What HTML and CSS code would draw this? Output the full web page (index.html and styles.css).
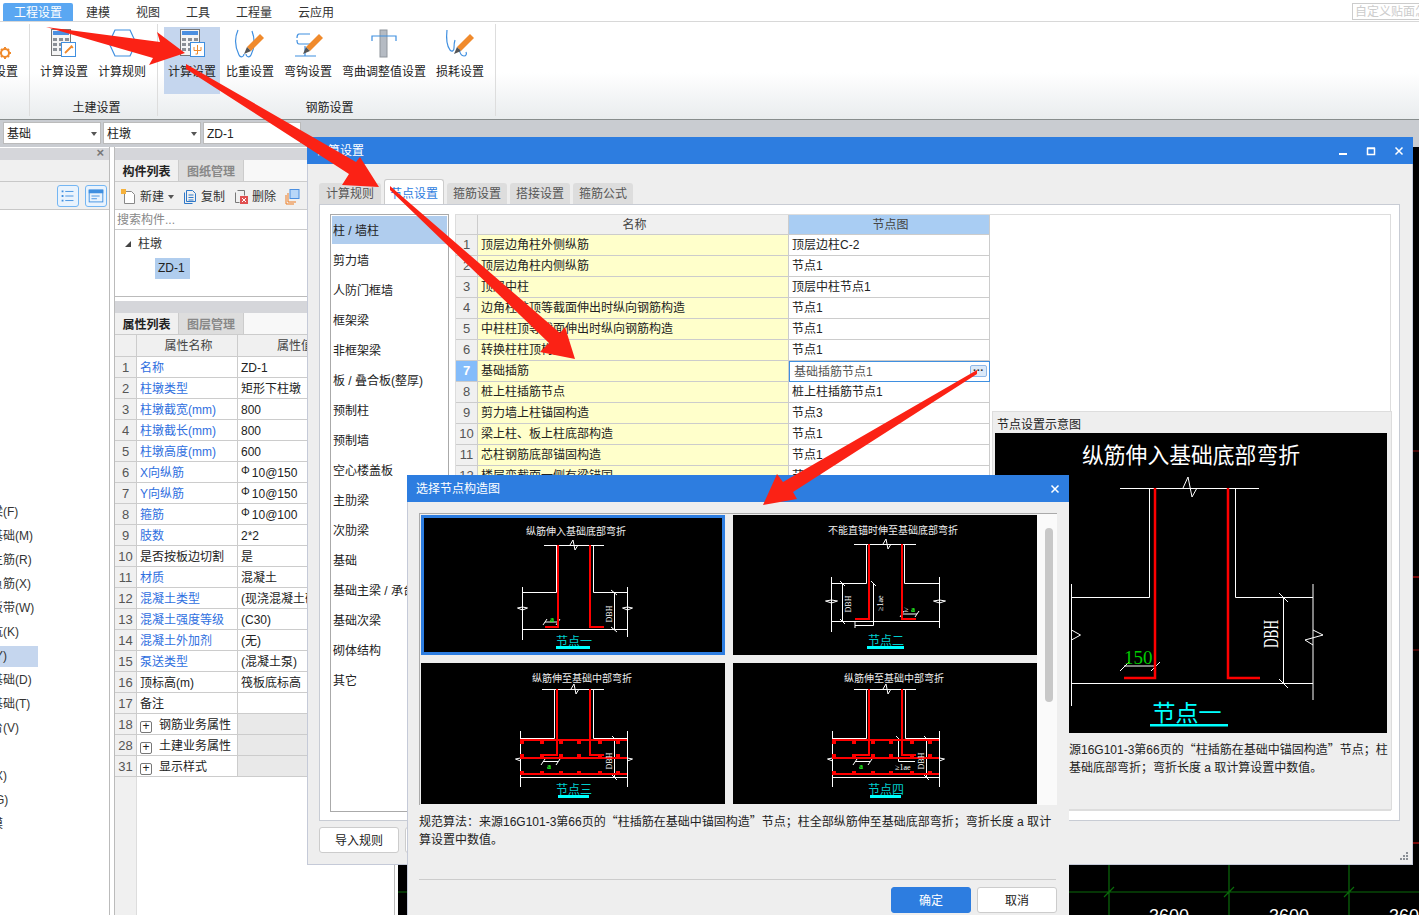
FILE: index.html
```html
<!DOCTYPE html>
<html lang="zh-CN">
<head>
<meta charset="utf-8">
<title>计算设置</title>
<link rel="stylesheet" href="styles.css">
</head>
<body>
<div class="app">
  <nav class="menu">
    <span class="menu-tab active">工程设置</span>
    <span class="menu-tab">建模</span>
    <span class="menu-tab">视图</span>
    <span class="menu-tab">工具</span>
    <span class="menu-tab">工程量</span>
    <span class="menu-tab">云应用</span>
    <span class="menu-search">自定义贴面怎么做</span>
  </nav>

  <section class="ribbon">
    <div class="group group-clip">
      <div class="group-items">
        <div class="rb-item">
          <svg class="rb-icon" viewBox="0 0 34 36"><circle cx="28" cy="26" r="4" class="gear"/><path class="gear-teeth" d="M28 20v2M28 30v2M22 26h2M32 26h2M24 22l1.500 1.500M30.500 28.500L32 30M24 30l1.500-1.500M30.500 23.500L32 22"/></svg>
          <span>楼层设置</span>
        </div>
      </div>
    </div>
    <div class="group group-civil">
      <div class="group-items">
        <div class="rb-item">
          <svg class="rb-icon" viewBox="0 0 34 36">
            <rect x="4.500" y="2.500" width="19" height="26" class="calc"/><rect x="6" y="4" width="16" height="4" class="calc-top"/>
            <path class="calc-keys" d="M6 11h4v3H6zM12 11h4v3h-4zM18 11h4v3h-4zM6 16h4v3H6zM12 16h4v3h-4zM6 21h4v3H6zM12 21h4v3h-4z"/>
            <rect x="14.500" y="15.500" width="14" height="14" class="doc"/>
            <path class="wrench" d="M18 26l6-6M24 18.500l1.800 2.500"/>
          </svg>
          <span>计算设置</span>
        </div>
        <div class="rb-item">
          <svg class="rb-icon" viewBox="0 0 34 36"><path class="hook" d="M10 3h15l6 13-6 13H10L4 16z"/></svg>
          <span>计算规则</span>
        </div>
      </div>
      <div class="group-name">土建设置</div>
    </div>
    <div class="group group-rebar">
      <div class="group-items">
        <div class="rb-item selected">
          <svg class="rb-icon" viewBox="0 0 34 36">
            <rect x="5.500" y="2.500" width="19" height="26" class="calc"/><rect x="7" y="4" width="16" height="4" class="calc-top"/>
            <path class="calc-keys" d="M7 11h4v3H7zM13 11h4v3h-4zM19 11h4v3h-4zM7 16h4v3H7zM13 16h4v3h-4zM7 21h4v3H7zM13 21h4v3h-4z"/>
            <rect x="15.500" y="15.500" width="14" height="14" class="doc"/>
            <path class="wrench-thin" d="M22.500 18v9M19 20v3.500h7V20M22.500 27h-2"/>
          </svg>
          <span>计算设置</span>
        </div>
        <div class="rb-item">
          <svg class="rb-icon" viewBox="0 0 34 36">
            <path class="hook" d="M5 3C1 12 2 20 6 28c1.500 3 5 2 5-1M19 4c3 8 3 16-1 24-1.500 3-5 2-5-1"/>
            <path class="pencil" d="M14 20L27 7l4 4-13 13z"/><path class="pencil-tip" d="M14 20l-3 7 7-3z"/>
          </svg>
          <span>比重设置</span>
        </div>
        <div class="rb-item">
          <svg class="rb-icon" viewBox="0 0 34 36">
            <path class="hook" d="M8 7h11M6 11c0-4 2-4 2-4M8 17h14M6 13c0 4 2 4 2 4M4 29h21M14 19v10"/>
            <path class="pencil" d="M15 20L28 7l4 4-13 13z"/><path class="pencil-tip" d="M15 20l-3 7 7-3z"/>
          </svg>
          <span>弯钩设置</span>
        </div>
        <div class="rb-item">
          <svg class="rb-icon" viewBox="0 0 34 36">
            <rect x="13" y="3" width="7" height="27" class="column"/>
            <path class="hook" d="M5 14V9h24v5"/>
          </svg>
          <span>弯曲调整值设置</span>
        </div>
        <div class="rb-item">
          <svg class="rb-icon" viewBox="0 0 34 36">
            <path class="hook" d="M4 3c-1 9 0 16 3 20 2 2 4 1 4-2 0-3 0-5 1-8M16 22c1 5 3 7 5 7s3-2 2-4"/>
            <path class="pencil" d="M14 20L27 7l4 4-13 13z"/><path class="pencil-tip" d="M14 20l-3 7 7-3z"/>
          </svg>
          <span>损耗设置</span>
        </div>
      </div>
      <div class="group-name">钢筋设置</div>
    </div>
  </section>

  <div class="selectors">
    <div class="selector">基础<i class="caret"></i></div>
    <div class="selector">柱墩<i class="caret"></i></div>
    <div class="selector">ZD-1</div>
  </div>

  <div class="workspace">
    <aside class="nav-panel">
      <div class="panel-head"><span class="panel-close">×</span></div>
      <div class="nav-bar"></div>
      <div class="nav-tools">
        <span class="view-btn"><svg viewBox="0 0 22 22"><path class="view-ln" d="M8 6h9M8 11h9M8 16h9"/><path class="view-dot" d="M4 5h2v2H4zM4 10h2v2H4zM4 15h2v2H4z"/></svg></span>
        <span class="view-btn"><svg viewBox="0 0 22 22"><rect x="3.500" y="4.500" width="15" height="13" class="view-ln"/><path class="view-dot" d="M3 4h16v4H3z"/><path class="view-ln" d="M6 11h9M6 14h6"/></svg></span>
      </div>
      <ul class="nav-list">
        <li class="nav-item">基础梁(F)</li>
        <li class="nav-item">筏板基础(M)</li>
        <li class="nav-item">筏板主筋(R)</li>
        <li class="nav-item">筏板负筋(X)</li>
        <li class="nav-item">基础板带(W)</li>
        <li class="nav-item">集水坑(K)</li>
        <li class="nav-item sel">柱墩(Y)</li>
        <li class="nav-item">独立基础(D)</li>
        <li class="nav-item">条形基础(T)</li>
        <li class="nav-item">桩承台(V)</li>
        <li class="nav-item"></li>
        <li class="nav-item">垫层(X)</li>
        <li class="nav-item">地沟(G)</li>
        <li class="nav-item">砖胎膜</li>
      </ul>
    </aside>

    <section class="mid-panel">
      <div class="panel-head"></div>
      <div class="panel-tabs"><span class="panel-tab on">构件列表</span><span class="panel-tab">图纸管理</span></div>
      <div class="tools">
        <span class="tool">
          <svg class="tool-icon wide" viewBox="0 0 15 16"><path class="t-doc" d="M3.500 2.500h7l3 3v9h-10z"/><path class="t-star" d="M0 0h5v5H0z"/></svg>新建<i class="caret"></i>
        </span>
        <span class="tool">
          <svg class="tool-icon" viewBox="0 0 14 16"><path class="t-blue" d="M1.500 3.500v11h8M3.500 1.500h6l3 3v8h-9zM5.500 6h5M5.500 8.500h5M5.500 11h5"/></svg>复制
        </span>
        <span class="tool">
          <svg class="tool-icon" viewBox="0 0 14 16"><path class="t-gray" d="M1.500 3.500v10h4M3.500 1.500h7v5"/><path class="t-red" d="M6 7h8v8H6z"/><path class="t-x" d="M8 9l4 4M12 9l-4 4"/></svg>删除
        </span>
        <span class="tool">
          <svg class="tool-icon wide" viewBox="0 0 15 16"><path class="t-orange" d="M1 6v9h8M3 4v9h8"/><rect x="5" y="0.500" width="9" height="9" class="t-fill"/></svg>
        </span>
      </div>
      <div class="search">搜索构件...</div>
      <div class="tree">
        <div class="tree-root"><i class="tree-arrow"></i>柱墩</div>
        <div class="tree-leaf">ZD-1</div>
      </div>
      <div class="panel-gap"></div>
      <div class="panel-head"></div>
      <div class="panel-tabs"><span class="panel-tab on">属性列表</span><span class="panel-tab">图层管理</span></div>
      <table class="props">
        <colgroup><col class="c-no"><col class="c-name"><col class="c-val"></colgroup>
        <thead><tr><th></th><th>属性名称</th><th class="val-head">属性值</th></tr></thead>
        <tbody>
          <tr><td class="no">1</td><td class="link">名称</td><td>ZD-1</td></tr>
          <tr><td class="no">2</td><td class="link">柱墩类型</td><td>矩形下柱墩</td></tr>
          <tr><td class="no">3</td><td class="link">柱墩截宽(mm)</td><td>800</td></tr>
          <tr><td class="no">4</td><td class="link">柱墩截长(mm)</td><td>800</td></tr>
          <tr><td class="no">5</td><td class="link">柱墩高度(mm)</td><td>600</td></tr>
          <tr><td class="no">6</td><td class="link">X向纵筋</td><td><sup class="rebar">Φ</sup>10@150</td></tr>
          <tr><td class="no">7</td><td class="link">Y向纵筋</td><td><sup class="rebar">Φ</sup>10@150</td></tr>
          <tr><td class="no">8</td><td class="link">箍筋</td><td><sup class="rebar">Φ</sup>10@100</td></tr>
          <tr><td class="no">9</td><td class="link">肢数</td><td>2*2</td></tr>
          <tr><td class="no">10</td><td>是否按板边切割</td><td>是</td></tr>
          <tr><td class="no">11</td><td class="link">材质</td><td>混凝土</td></tr>
          <tr><td class="no">12</td><td class="link">混凝土类型</td><td>(现浇混凝土碎石)</td></tr>
          <tr><td class="no">13</td><td class="link">混凝土强度等级</td><td>(C30)</td></tr>
          <tr><td class="no">14</td><td class="link">混凝土外加剂</td><td>(无)</td></tr>
          <tr><td class="no">15</td><td class="link">泵送类型</td><td>(混凝土泵)</td></tr>
          <tr><td class="no">16</td><td>顶标高(m)</td><td>筏板底标高</td></tr>
          <tr><td class="no">17</td><td>备注</td><td></td></tr>
          <tr><td class="no">18</td><td><span class="plus">+</span>钢筋业务属性</td><td class="gray"></td></tr>
          <tr><td class="no">28</td><td><span class="plus">+</span>土建业务属性</td><td class="gray"></td></tr>
          <tr><td class="no">31</td><td><span class="plus">+</span>显示样式</td><td class="gray"></td></tr>
        </tbody>
      </table>
      <div class="props-gutter"></div>
    </section>

    <div class="canvas">
      <svg class="canvas-svg" viewBox="398 146 1021 769">
        <path class="grid-ln" d="M398 891H1419M1109 860V915M1229 860V915M1349 860V915M1104 896l10-10M1224 896l10-10M1344 896l10-10"/>
        <path class="tick-dark" d="M1413 450h6M1413 649h6"/>
        <path class="tick-red" d="M1413 576h6M1413 842h6"/>
        <text class="dim-text" x="1169" y="921">3600</text>
        <text class="dim-text" x="1289" y="921">3600</text>
        <text class="dim-text" x="1409" y="921">3600</text>
      </svg>
    </div>
  </div>
</div>

<div class="dialog dlg-calc">
  <header class="dlg-title">
    <span>计算设置</span>
    <span class="win-btns">
      <svg viewBox="0 0 10 10"><path class="win-fill" d="M1 7h8v2H1z"/></svg>
      <svg viewBox="0 0 10 10"><path class="win-ln" d="M1.500 2.500h7v6h-7zM1 2h8"/></svg>
      <svg viewBox="0 0 10 10"><path class="win-ln" d="M1.500 1.500l7 7M8.500 1.500l-7 7"/></svg>
    </span>
  </header>
  <div class="tabs">
    <span class="tab first">计算规则</span>
    <span class="tab on">节点设置</span>
    <span class="tab">箍筋设置</span>
    <span class="tab">搭接设置</span>
    <span class="tab">箍筋公式</span>
  </div>
  <div class="tab-panel">
    <ul class="cat-list">
      <li class="cat on">柱 / 墙柱</li>
      <li class="cat">剪力墙</li>
      <li class="cat">人防门框墙</li>
      <li class="cat">框架梁</li>
      <li class="cat">非框架梁</li>
      <li class="cat">板 / 叠合板(整厚)</li>
      <li class="cat">预制柱</li>
      <li class="cat">预制墙</li>
      <li class="cat">空心楼盖板</li>
      <li class="cat">主肋梁</li>
      <li class="cat">次肋梁</li>
      <li class="cat">基础</li>
      <li class="cat">基础主梁 / 承台梁</li>
      <li class="cat">基础次梁</li>
      <li class="cat">砌体结构</li>
      <li class="cat">其它</li>
    </ul>
    <div class="node-area">
      <table class="nodes">
        <colgroup><col class="n-no"><col class="n-name"><col class="n-img"></colgroup>
        <thead><tr><th></th><th>名称</th><th class="hl">节点图</th></tr></thead>
        <tbody>
          <tr><td class="no">1</td><td class="yl">顶层边角柱外侧纵筋</td><td>顶层边柱C-2</td></tr>
          <tr><td class="no">2</td><td class="yl">顶层边角柱内侧纵筋</td><td>节点1</td></tr>
          <tr><td class="no">3</td><td class="yl">顶层中柱</td><td>顶层中柱节点1</td></tr>
          <tr><td class="no">4</td><td class="yl">边角柱柱顶等截面伸出时纵向钢筋构造</td><td>节点1</td></tr>
          <tr><td class="no">5</td><td class="yl">中柱柱顶等截面伸出时纵向钢筋构造</td><td>节点1</td></tr>
          <tr><td class="no">6</td><td class="yl">转换柱柱顶构造</td><td>节点1</td></tr>
          <tr><td class="no cur">7</td><td class="yl">基础插筋</td><td class="editing"><span class="edit-val">基础插筋节点1</span><span class="more">···</span></td></tr>
          <tr><td class="no">8</td><td class="yl">桩上柱插筋节点</td><td>桩上柱插筋节点1</td></tr>
          <tr><td class="no">9</td><td class="yl">剪力墙上柱锚固构造</td><td>节点3</td></tr>
          <tr><td class="no">10</td><td class="yl">梁上柱、板上柱底部构造</td><td>节点1</td></tr>
          <tr><td class="no">11</td><td class="yl">芯柱钢筋底部锚固构造</td><td>节点1</td></tr>
          <tr><td class="no">12</td><td class="yl">楼层变截面一侧有梁锚固</td><td>节点1</td></tr>
        </tbody>
      </table>
      <div class="side">
        <div class="preview">
          <div class="preview-title">节点设置示意图</div>
          <svg class="preview-img" viewBox="995 433 392 300">
            <text class="pv-title" x="1191" y="463">纵筋伸入基础底部弯折</text>
            <path class="ln" d="M1120 488.500H1259M1149.500 488.500V597.500H1071.500M1071.500 584V706M1235.500 488.500V597.500H1313M1313 584V700M1071.500 683.500H1313M1283.500 597.500V683.500M1279 593l9 9M1279 679l9 9M1124 666H1155M1120 671l9-9M1151 671l9-9"/>
            <path class="ln" d="M1183 488l5-11 4 20 5-9M1313 630l10 5-18 5 8 5M1071.500 630l9 5-9 5"/>
            <path class="rb-thick" d="M1155 488V678H1124M1228 488V678H1260"/>
            <text class="pv-dbh" transform="translate(1278 634) rotate(-90)" textLength="28" lengthAdjust="spacingAndGlyphs">DBH</text>
            <text class="pv-num" x="1124" y="664">150</text>
            <text class="pv-name" x="1187" y="721">节点一</text>
            <rect class="cy" x="1150" y="724" width="78" height="2.500"/>
          </svg>
          <p class="preview-text">规范算法：来源16G101-3第66页的<span class="quote">“</span>柱插筋在基础中锚固构造<span class="quote">”</span>节点；柱全部纵筋伸至基础底部弯折；弯折长度 a 取计算设置中数值。</p>
        </div>
      </div>
    </div>
  </div>
  <div class="dlg-foot">
    <button class="btn">导入规则</button>
    <button class="btn"></button>
  </div>
  <svg class="grip" viewBox="0 0 9 9"><path d="M6 0h2v2H6zM3 3h2v2H3zM6 3h2v2H6zM0 6h2v2H0zM3 6h2v2H3zM6 6h2v2H6z"/></svg>
</div>

<div class="dialog dlg-node">
  <header class="dlg-title">
    <span>选择节点构造图</span>
    <span class="win-btns"><svg viewBox="0 0 10 10"><path class="win-ln" d="M1.500 1.500l7 7M8.500 1.500l-7 7"/></svg></span>
  </header>
  <div class="chooser">
    <div class="thumbs">
      <div class="thumb selected">
        <svg viewBox="424 518 298 134">
          <text class="th-title" x="576" y="535">纵筋伸入基础底部弯折</text>
          <path class="ln" d="M544 545.500H604M556.500 545.500V592.500H522.500M522.500 587V640M593.500 545.500V592.500H627.500M627.500 587V637M522.500 629.500H627.500M614.500 592.500V630M611 590l6 5M611 627l6 5M545 622H558M543 625l4-6M556 625l4-6"/>
          <path class="ln" d="M570 545l3-5 2 10 3-5M522.500 607l-5 1 5 2 5-2zM627.500 607l-5 1 5 2 5-2z"/>
          <path class="rb" d="M558 545V627H545M590 545V627H604"/>
          <text class="th-dbh" transform="translate(612 614) rotate(-90)">DBH</text>
          <text class="th-a" x="552" y="622">a</text>
          <text class="th-name" x="574" y="646">节点一</text>
          <rect class="cy" x="556" y="646" width="34" height="3"/>
        </svg>
      </div>
      <div class="thumb">
        <svg viewBox="733 515 304 140">
          <text class="th-title" x="893" y="534">不能直锚时伸至基础底部弯折</text>
          <path class="ln" d="M854 544.500H916M866.500 544.500V583.500H831.500M831.500 577V632M904.500 544.500V583.500H939.500M939.500 577V628M831.500 621.500H939.500M842.500 583.500V621.500M840 581l5 5M840 619l5 5M873.500 583.500V625.500H855M871 581l5 5M855 622v6M902 614H917M900 617l4-6M915 617l4-6"/>
          <path class="ln" d="M883 544l3-5 2 10 3-5M831.500 600l-6 1 6 2 6-2zM939.500 600l-6 1 6 2 6-2z"/>
          <path class="rb" d="M869 544V619H855M902 544V619H916"/>
          <text class="th-dbh" transform="translate(851 604) rotate(-90)">DBH</text>
          <text class="th-lae" transform="translate(883 611) rotate(-90)">≥1ae</text>
          <text class="th-small" x="904" y="612">≥</text>
          <text class="th-a" x="913" y="612">a</text>
          <text class="th-name" x="886" y="645">节点二</text>
          <rect class="cy" x="867" y="646" width="37" height="3"/>
        </svg>
      </div>
      <div class="thumb">
        <svg viewBox="421 663 304 141">
          <text class="th-title" x="582" y="682">纵筋伸至基础中部弯折</text>
          <path class="ln" d="M542 689.500H604M554.500 689.500V738.500H520.500M520.500 731V787M593.500 689.500V738.500H627.500M627.500 731V787M520.500 777.500H627.500M614.500 738.500V777.500M612 736l5 5M612 775l5 5M543 761.500H558M541 765l4-6M556 765l4-6"/>
          <path class="ln" d="M571 689l3-5 2 10 3-5M520.500 758l-5 1 5 2M627.500 758l5 1-5 2"/>
          <path class="rb" d="M520 740H627M520 758H627M520 774H627M557 689V755H540M590 689V755H604"/>
          <path class="bar-dots" d="M520 741h4v3h-4zM540 741h4v3h-4zM559 741h4v3h-4zM577 741h4v3h-4zM598 741h4v3h-4zM616 741h4v3h-4zM520 754h4v3h-4zM540 754h4v3h-4zM559 754h4v3h-4zM577 754h4v3h-4zM598 754h4v3h-4zM616 754h4v3h-4zM520 771h4v3h-4zM540 771h4v3h-4zM559 771h4v3h-4zM577 771h4v3h-4zM598 771h4v3h-4zM616 771h4v3h-4z"/>
          <text class="th-dbh" transform="translate(612 761) rotate(-90)">DBH</text>
          <text class="th-a" x="549" y="769">a</text>
          <text class="th-name" x="574" y="794">节点三</text>
          <rect class="cy" x="558" y="795" width="31" height="3"/>
        </svg>
      </div>
      <div class="thumb">
        <svg viewBox="733 663 304 141">
          <text class="th-title" x="894" y="682">纵筋伸至基础中部弯折</text>
          <path class="ln" d="M854 689.500H916M866.500 689.500V738.500H832.500M832.500 731V787M905.500 689.500V738.500H939.500M939.500 731V787M832.500 777.500H939.500M926.500 738.500V777.500M924 736l5 5M924 775l5 5M855 761.500H870M853 765l4-6M868 765l4-6M898.500 738.500V761.500H915M896 736l5 5"/>
          <path class="ln" d="M883 689l3-5 2 10 3-5M832.500 758l-5 1 5 2M939.500 758l5 1-5 2"/>
          <path class="rb" d="M832 740H939M832 758H939M832 774H939M869 689V755H852M902 689V755H916"/>
          <path class="bar-dots" d="M832 741h4v3h-4zM852 741h4v3h-4zM871 741h4v3h-4zM889 741h4v3h-4zM910 741h4v3h-4zM928 741h4v3h-4zM832 754h4v3h-4zM852 754h4v3h-4zM871 754h4v3h-4zM889 754h4v3h-4zM910 754h4v3h-4zM928 754h4v3h-4zM832 771h4v3h-4zM852 771h4v3h-4zM871 771h4v3h-4zM889 771h4v3h-4zM910 771h4v3h-4zM928 771h4v3h-4z"/>
          <text class="th-dbh" transform="translate(924 761) rotate(-90)">DBH</text>
          <text class="th-lae" x="895" y="770">≥1ae</text>
          <text class="th-a" x="861" y="769">a</text>
          <text class="th-name" x="886" y="794">节点四</text>
          <rect class="cy" x="870" y="795" width="31" height="3"/>
        </svg>
      </div>
    </div>
    <div class="scroll"><i class="scroll-thumb"></i></div>
  </div>
  <p class="node-text">规范算法：来源16G101-3第66页的<span class="quote">“</span>柱插筋在基础中锚固构造<span class="quote">”</span>节点；柱全部纵筋伸至基础底部弯折；弯折长度 a 取计算设置中数值。</p>
  <div class="node-rule"></div>
  <div class="node-foot">
    <button class="btn primary">确定</button>
    <button class="btn">取消</button>
  </div>
</div>

<svg class="arrows" viewBox="0 0 1419 915">
  <polygon points="46,27 160,42 157,32 185,53 149,65 153,58"/>
  <polygon points="186,64 356,162 360,157 379,187 342,185 349,174 186,69"/>
  <polygon points="390,186 560,333 565,327 575,359 540,352 549,343 390,190"/>
  <polygon points="977,370 783,482 777,474 763,505 797,499 793,492 977,374"/>
</svg>
</body>
</html>
```

FILE: styles.css
```css
* { box-sizing: border-box; }
html, body { margin: 0; padding: 0; }
body {
  position: relative;
  width: 1419px;
  height: 915px;
  overflow: hidden;
  background: #fff;
  color: #222;
  font: 12px/18px "Liberation Sans", "Noto Sans CJK SC", sans-serif;
}
ul { list-style: none; margin: 0; padding: 0; }
p { margin: 0; }
svg { display: block; }
.app { display: flex; flex-direction: column; width: 1419px; height: 915px; }
.quote { font-family: "Noto Sans CJK SC", sans-serif; }

/* menu */
.menu { display: flex; flex: none; height: 22px; padding-left: 3px; border-bottom: 1px solid #d8d8d8; overflow: hidden; color: #333; }
.menu-tab { height: 21px; padding: 4px 13px 0; line-height: 18px; }
.menu-tab.active { height: 18px; margin-top: 3px; padding: 1px 11px 0; background: #5aa7f2; color: #fff; border-radius: 2px 2px 0 0; }
.menu-search { flex: none; width: 90px; height: 17px; margin: 3px -23px 0 auto; padding: 1px 0 0 2px; border: 1px solid #ccc; color: #ccc; line-height: 15px; white-space: nowrap; overflow: hidden; }

/* ribbon */
.ribbon { display: flex; flex: none; height: 98px; padding-top: 2px; border-bottom: 1px solid #878c8c; background: linear-gradient(#fff 52%, #e9ecee); }
.group { display: flex; flex-direction: column; align-items: flex-start; height: 92px; padding-top: 3px; border-right: 1px solid #ddd; }
.group-clip { flex: none; width: 30px; align-items: flex-end; padding-right: 7px; overflow: hidden; }
.group-civil { flex: none; width: 128px; padding-left: 6px; }
.group-rebar { flex: none; width: 338px; padding-left: 6px; }
.group-items { display: flex; flex: none; gap: 2px; height: 67px; }
.group-name { flex: none; align-self: center; margin-top: 5px; color: #222; }
.rb-item { display: flex; flex: none; flex-direction: column; align-items: center; padding: 0 4px; white-space: nowrap; }
.rb-item.selected { background: #c5d6ee; }
.rb-icon { width: 34px; height: 36px; flex: none; }
.gear { fill: none; stroke: #f08a2c; stroke-width: 2; }
.gear-teeth { fill: none; stroke: #f08a2c; stroke-width: 2; }
.calc { fill: #f4f4f4; stroke: #777; }
.calc-top { fill: #4b8fe0; }
.calc-keys { fill: #8a8f96; }
.doc { fill: #fff; stroke: #3f8fe0; }
.wrench { fill: none; stroke: #f08a2c; stroke-width: 1.800; }
.wrench-thin { fill: none; stroke: #f08a2c; stroke-width: 1; }
.hook { fill: none; stroke: #3f8fe0; stroke-width: 1.200; }
.pencil { fill: #f08a2c; }
.pencil-tip { fill: #555; }
.column { fill: #b5bbc3; stroke: #8f959c; }

/* selectors */
.selectors { display: flex; flex: none; gap: 2px; height: 27px; padding: 2px 0 0 3px; background: #c9ccd1; }
.selector { position: relative; display: flex; flex: none; align-items: center; width: 98px; height: 22px; padding: 1px 0 0 3px; background: #fff; border: 1px solid #bbb; }
.caret { display: block; width: 0; height: 0; border: 3.500px solid transparent; border-top: 4px solid #555; border-bottom: 0; }
.selector .caret { margin-left: auto; margin-right: 3px; }

/* workspace */
.workspace { display: flex; flex: 1; min-height: 0; padding-top: 0; background: #fff; }
.panel-head { position: relative; flex: none; height: 12px; margin-top: 1px; background: #d5d6da; }
.panel-close { position: absolute; right: 5px; top: -4px; color: #777; font-size: 13px; font-weight: bold; }

.nav-panel { display: flex; flex: none; flex-direction: column; width: 110px; border-right: 1px solid #bbb; overflow: hidden; }
.nav-bar { flex: none; height: 22px; background: #f0f0f0; border-bottom: 1px solid #c8c8c8; }
.nav-tools { display: flex; flex: none; justify-content: flex-end; gap: 6px; height: 28px; padding: 3px 2px 0 0; background: #f0f0f0; border-bottom: 1px solid #c8c8c8; }
.view-btn { display: block; width: 22px; height: 22px; background: #e9f3fd; border: 1px solid #74b6f3; border-radius: 3px; }
.view-ln { fill: none; stroke: #3f8fe0; }
.view-dot { fill: #3f8fe0; }
.nav-list { padding-top: 292px; }
.nav-item { width: 38px; height: 21px; margin-bottom: 3px; line-height: 21px; text-indent: -33px; white-space: nowrap; color: #333; }
.nav-item.sel { background: #c5d6ee; }

.mid-panel { display: flex; flex: none; flex-direction: column; width: 281px; margin: 0 3px 0 4px; border-left: 1px solid #bbb; border-right: 1px solid #bbb; overflow: hidden; }
.panel-tabs { display: flex; flex: none; height: 22px; border-bottom: 1px solid #ccc; background: #f8f8f8; }
.panel-tab { width: 65px; height: 21px; padding-top: 2px; text-align: center; line-height: 21px; background: #ddd; color: #888; font-weight: bold; border-right: 1px solid #ccc; }
.panel-tab.on { width: 64px; background: #f0f0f0; color: #222; }
.tools { display: flex; flex: none; align-items: center; gap: 9px; height: 28px; padding: 2px 0 0 6px; background: #f0f0f0; border-bottom: 1px solid #ccc; white-space: nowrap; color: #333; }
.tool { display: flex; flex: none; align-items: center; gap: 4px; }
.tool-icon { width: 14px; height: 16px; }
.tool-icon.wide { width: 15px; }
.t-doc { fill: #fff; stroke: #888; }
.t-star { fill: #f6b23c; }
.t-blue { fill: none; stroke: #2f78c8; }
.t-gray { fill: none; stroke: #777; }
.t-red { fill: #e05050; }
.t-x { stroke: #fff; }
.t-orange { fill: none; stroke: #ee7d22; }
.t-fill { fill: #b8d7f8; stroke: #4b8fe0; }
.search { flex: none; height: 20px; padding-left: 2px; line-height: 20px; color: #888; background: #fff; border-bottom: 1px solid #ccc; }
.tree { flex: none; height: 67px; padding-top: 5px; border-bottom: 1px solid #bbb; }
.tree-root { display: flex; align-items: center; gap: 7px; padding-left: 10px; color: #333; }
.tree-arrow { display: block; width: 0; height: 0; border-right: 6px solid #444; border-top: 6px solid transparent; }
.tree-leaf { width: 35px; height: 21px; margin: 5px 0 0 40px; padding-left: 3px; line-height: 21px; background: #b0cdee; }
.panel-gap { flex: none; height: 3px; }

.props { flex: none; width: 279px; table-layout: fixed; border-spacing: 0; border-collapse: separate; }
.c-no { width: 22px; }
.c-name { width: 101px; }
.c-val { width: 156px; }
.props th, .props td, .nodes th, .nodes td { padding: 0 0 0 3px; border-right: 1px solid #ccc; border-bottom: 1px solid #ccc; line-height: 16px; white-space: nowrap; overflow: hidden; font-weight: normal; }
.props th { height: 22px; padding-top: 1px; background: #f0f0f0; text-align: center; color: #444; }
.props td { height: 21px; padding-top: 1px; }
.props th.val-head { padding-right: 44px; }
.props td.no { padding: 1px 0 0; }
.no { background: #f0f0f0; text-align: center; color: #555; font-size: 13px; }
.nodes td.no { padding: 0; }
.link { color: #2f6fe0; }
.gray { background: #e9e9e9; }
.rebar { font-size: 11px; line-height: 9px; vertical-align: 3px; margin-right: 2px; }
.plus { display: inline-block; width: 12px; height: 12px; margin-right: 7px; border: 1px solid #777; border-radius: 2px; text-align: center; line-height: 9px; vertical-align: -1px; font-size: 12px; }
.props-gutter { flex: 1; width: 22px; background: #f0f0f0; border-right: 1px solid #ddd; }

.canvas { flex: 1; min-width: 0; background: #000; overflow: hidden; }
.canvas-svg { width: 1021px; height: 769px; }
.grid-ln { fill: none; stroke: #0a6a0a; stroke-width: 1.200; }
.tick-dark { stroke: #8a0f0f; }
.tick-red { stroke: #f01010; }
.dim-text { fill: #fff; font: 18px "Liberation Sans", sans-serif; text-anchor: middle; }

/* dialogs: floating windows */
.dialog { position: absolute; background: #eee; border: 1px solid #c5cad8; }
.dlg-title { display: flex; align-items: center; justify-content: space-between; height: 27px; background: #2d7de0; color: #fff; }
.win-btns { display: flex; gap: 18px; }
.win-btns svg { width: 10px; height: 10px; }
.win-fill { fill: #fff; }
.win-ln { fill: none; stroke: #fff; stroke-width: 1.500; }

.dlg-calc { left: 307px; top: 137px; width: 1106px; height: 728px; border-top: 0; }
.dlg-calc .dlg-title { padding: 0 9px 0 9px; margin-left: -1px; margin-right: -1px; }
.tabs { display: flex; align-items: flex-end; gap: 3px; height: 40px; padding-left: 11px; }
.tab { width: 60px; height: 21px; padding-top: 1px; line-height: 21px; text-align: center; background: #ddd; color: #555; border-radius: 3px 3px 0 0; }
.tab.first { width: 62px; }
.tab.on { height: 25px; padding-top: 1px; line-height: 26px; background: #fff; color: #2d7de0; border: 1px solid #ccc; border-bottom: 0; }
.tab-panel { display: flex; gap: 6px; width: 1081px; height: 617px; margin-left: 11px; padding: 9px 8px 10px 10px; background: #fff; border: 1px solid #c8ccd4; }
.cat-list { flex: none; width: 119px; height: 598px; padding: 1px; background: #fff; border: 1px solid #aaa; }
.cat { height: 28px; margin-bottom: 2px; padding: 1px 0 0 1px; line-height: 28px; color: #222; white-space: nowrap; overflow: hidden; }
.cat.on { background: #b0cdee; }
.node-area { display: flex; flex: 1; min-width: 0; height: 597px; border: 1px solid #ddd; }
.nodes { flex: none; align-self: flex-start; width: 534px; table-layout: fixed; border-spacing: 0; border-collapse: separate; }
.n-no { width: 22px; }
.n-name { width: 311px; }
.n-img { width: 201px; }
.nodes th { height: 20px; background: #f0f0f0; text-align: center; color: #444; }
.nodes th.hl { background: #a9cdf3; }
.nodes td { height: 21px; }
.yl { background: #ffffcb; }
.nodes td.cur { background: #84bcfa; color: #fff; font-weight: bold; }
.nodes .editing { position: relative; padding-left: 4px; border: 1px solid #3f8fe0; color: #555; }
.edit-val { display: block; }
.more { position: absolute; right: 2px; top: 3px; width: 17px; height: 12px; border: 1px solid #8fb8e8; background: #dbe9f8; border-radius: 2px; text-align: center; line-height: 8px; font-size: 11px; font-weight: bold; color: #333; }
.side { display: flex; flex: 1; flex-direction: column; justify-content: flex-end; padding: 0 0 0 2px; }
.preview { flex: none; height: 399px; padding: 3px 2px; background: #eee; border: 1px solid #ddd; }
.preview-title { height: 18px; padding-left: 2px; line-height: 20px; color: #222; }
.preview-img { width: 392px; height: 300px; background: #000; }
.preview-text { width: 394px; margin-top: 7px; padding-left: 2px; color: #222; }
.ln { fill: none; stroke: #fff; }
.rb-thick { fill: none; stroke: #f00; stroke-width: 2.500; }
.rb { fill: none; stroke: #f00; stroke-width: 2; }
.bar-dots { fill: #f00; }
.cy { fill: #0ff; }
.pv-title { fill: #fff; font: 21.800px "Noto Sans CJK SC", sans-serif; text-anchor: middle; }
.pv-dbh { fill: #fff; font: 20px "Liberation Serif", serif; text-anchor: middle; }
.pv-num { fill: #0c0; font: 19px "Liberation Serif", serif; }
.pv-name { fill: #0ff; font: 23px "Noto Sans CJK SC", sans-serif; text-anchor: middle; }
.dlg-foot { display: flex; gap: 6px; margin: 6px 0 0 11px; }
.btn { width: 80px; height: 26px; padding: 1px 0 0; background: #fff; border: 1px solid #ccc; border-radius: 3px; font: inherit; color: #222; }
.btn.primary { background: #2d7de0; border-color: #2d7de0; color: #fff; }
.grip { position: absolute; right: 3px; bottom: 3px; width: 9px; height: 9px; fill: #8a8f96; }

.dlg-node { left: 407px; top: 475px; width: 662px; height: 445px; border-top: 0; border-right: 0; border-bottom: 0; }
.dlg-node .dlg-title { padding: 0 9px; margin-left: -1px; }
.chooser { display: flex; width: 638px; height: 292px; margin: 11px 0 0 11px; border-top: 1px solid #aaa; border-left: 1px solid #aaa; }
.thumbs { display: grid; grid-template-columns: 304px 304px; grid-template-rows: 140px 141px; gap: 8px; flex: none; width: 617px; padding: 1px; }
.thumb { background: #000; overflow: hidden; }
.thumb svg { width: 304px; height: 100%; }
.thumb.selected { border: 3px solid #2d7de0; }
.thumb.selected svg { width: 298px; height: 134px; }
.scroll { flex: 1; padding: 14px 0 0 8px; background: #fafafa; }
.scroll-thumb { display: block; width: 8px; height: 174px; background: #c8c8c8; border-radius: 4px; }
.th-title { fill: #eee; font: 10px "Noto Sans CJK SC", sans-serif; text-anchor: middle; }
.th-dbh { fill: #fff; font: 8px "Liberation Serif", serif; text-anchor: middle; }
.th-lae { fill: #fff; font: 8px "Liberation Serif", serif; }
.th-small { fill: #fff; font: 8px "Liberation Serif", serif; }
.th-a { fill: #2e2; font: bold 8px "Liberation Serif", serif; text-anchor: middle; }
.th-name { fill: #0cc; font: 12px "Noto Sans CJK SC", sans-serif; text-anchor: middle; }
.node-text { width: 638px; margin: 7px 0 0 11px; color: #222; }
.node-rule { width: 637px; height: 1px; margin: 30px 0 0 11px; background: #ccc; }
.node-foot { display: flex; justify-content: flex-end; gap: 6px; width: 638px; margin: 7px 0 0 11px; }

/* annotation arrows */
.arrows { position: absolute; left: 0; top: 0; width: 1419px; height: 915px; fill: #fb2215; pointer-events: none; }
```
